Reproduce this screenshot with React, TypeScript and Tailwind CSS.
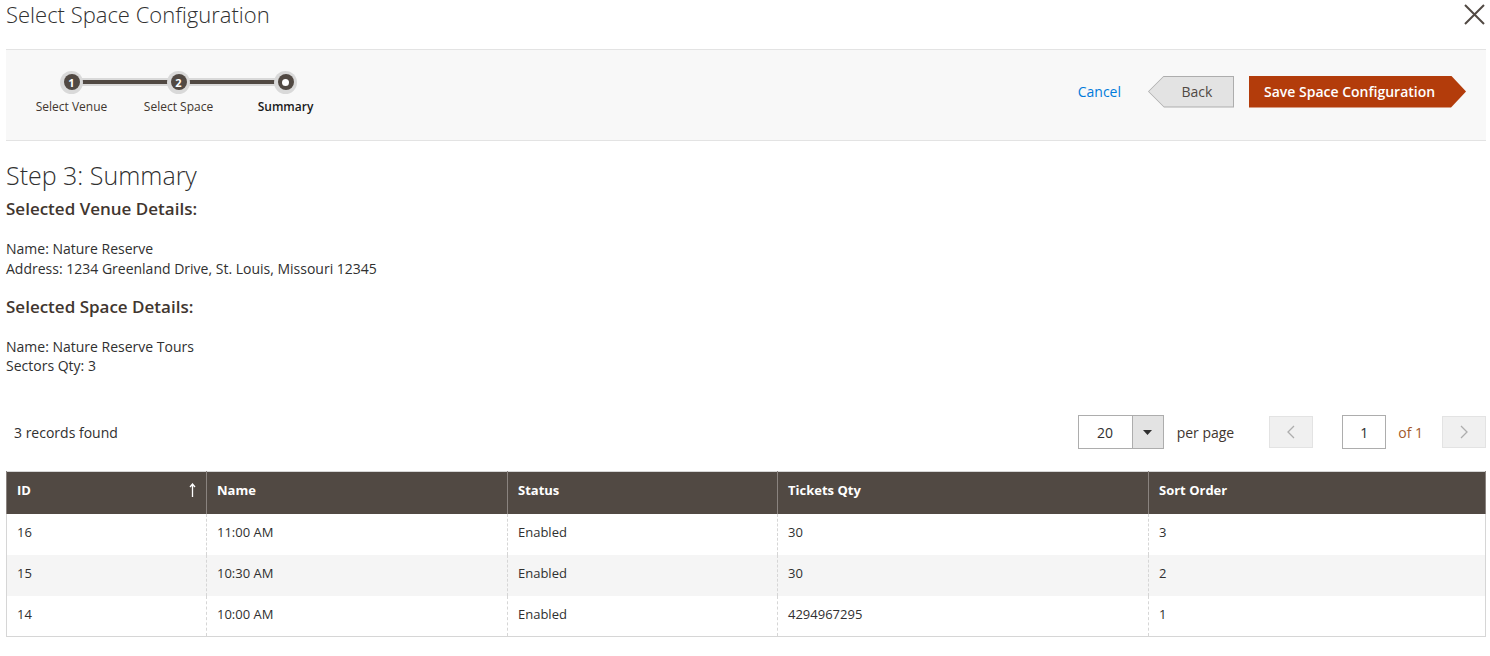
import React from "react";

const rows = [
  { id: "16", name: "11:00 AM", status: "Enabled", qty: "30", sort: "3" },
  { id: "15", name: "10:30 AM", status: "Enabled", qty: "30", sort: "2" },
  { id: "14", name: "10:00 AM", status: "Enabled", qty: "4294967295", sort: "1" },
];

const steps = [
  { label: "Select Venue", num: "1" },
  { label: "Select Space", num: "2" },
  { label: "Summary", num: "" },
];

const Stepper = () => (
  <div className="flex pl-[12px]">
    {steps.map((step, i) => (
      <div key={step.label} className="flex w-[107px] flex-col items-center">
        <div className="relative flex h-[24px] w-full items-center justify-center">
          {/* connector halves */}
          {i > 0 && (
            <div className="absolute left-0 top-[8px] h-[8px] w-1/2 bg-[#d9d9d9] py-[2px]">
              <div className="h-full w-full bg-[#514943]" />
            </div>
          )}
          {i < steps.length - 1 && (
            <div className="absolute right-0 top-[8px] h-[8px] w-1/2 bg-[#d9d9d9] py-[2px]">
              <div className="h-full w-full bg-[#514943]" />
            </div>
          )}
          <div className="relative flex h-[23px] w-[23px] items-center justify-center rounded-full bg-[#d9d9d9]">
            <div className="flex h-[16px] w-[16px] items-center justify-center rounded-full bg-[#514943] text-[11px] font-bold leading-none text-white">
              {step.num ? step.num : <div className="h-[7px] w-[7px] rounded-full bg-white" />}
            </div>
          </div>
        </div>
        <div
          className={
            "mt-[4px] text-[12px] leading-[18px] " +
            (step.num ? "text-[#41362f]" : "font-semibold text-[#1a1a1a]")
          }
        >
          {step.label}
        </div>
      </div>
    ))}
  </div>
);

export default function App() {
  return (
    <div className="min-h-[656px] w-full bg-white text-[#303030]" style={{ fontFamily: '"Open Sans", sans-serif' }}>
      {/* Modal header */}
      <div className="flex h-[49px] items-start justify-between pl-[6px] pr-[4px]">
        <h1 className="text-[22px] font-light leading-[28px] text-[#303030]">Select Space Configuration</h1>
        <button className="mt-[4px] mr-[1px] text-[#514943]">
          <svg width="21" height="21" viewBox="0 0 21 21" fill="none" stroke="currentColor" strokeWidth="2">
            <path d="M1 1L20 20M20 1L1 20" />
          </svg>
        </button>
      </div>

      {/* Steps bar */}
      <div className="ml-[6px] mr-[4px] flex h-[92px] items-center justify-between border-y border-[#e3e3e3] bg-[#f8f8f8]">
        <div className="pb-[4px]">
          <Stepper />
        </div>
        <div className="flex items-center pr-[20px] pb-[7px]">
          <button className="mr-[27px] text-[14px] text-[#007bdb]">Cancel</button>
          <div className="h-[32px] w-[86px] bg-[#adadad] [clip-path:polygon(16px_0,100%_0,100%_100%,16px_100%,0_50%)]">
            <div className="m-[1px] flex h-[30px] w-[84px] items-center justify-center pl-[12px] text-[14px] text-[#514943] bg-[#e3e3e3] [clip-path:polygon(15px_0,100%_0,100%_100%,15px_100%,0_50%)]">
              Back
            </div>
          </div>
          <div className="ml-[15px] flex h-[32px] w-[217px] items-center bg-[#b33c0b] pl-[15px] text-[14px] font-semibold text-white [clip-path:polygon(0_0,calc(100%-15px)_0,100%_50%,calc(100%-15px)_100%,0_100%)]">
            Save Space Configuration
          </div>
        </div>
      </div>

      {/* Summary */}
      <div className="pl-[6px] pr-[4px]">
        <h2 className="mt-[19px] text-[25px] font-light leading-[30px] text-[#303030]">Step 3: Summary</h2>
        <h3 className="mt-[9px] text-[17px] font-semibold leading-[20px] text-[#41362f]">Selected Venue Details:</h3>
        <div className="mt-[20px] text-[14px] leading-[20px]">
          <div>Name: Nature Reserve</div>
          <div>Address: 1234 Greenland Drive, St. Louis, Missouri 12345</div>
        </div>
        <h3 className="mt-[18px] text-[17px] font-semibold leading-[20px] text-[#41362f]">Selected Space Details:</h3>
        <div className="mt-[20px] text-[14px] leading-[19px]">
          <div>Name: Nature Reserve Tours</div>
          <div>Sectors Qty: 3</div>
        </div>

        {/* Grid toolbar */}
        <div className="mt-[40px] flex h-[34px] items-center justify-between">
          <div className="pl-[8px] text-[14px]">3 records found</div>
          <div className="flex items-center">
            <div className="flex h-[34px] w-[86px] border border-[#adadad] bg-white">
              <div className="flex w-[53px] items-center justify-center text-[14px]">20</div>
              <div className="flex w-[31px] items-center justify-center border-l border-[#adadad] bg-[#e3e3e3]">
                <svg width="9" height="5" viewBox="0 0 9 5">
                  <path d="M0 0H9L4.5 5Z" fill="#303030" />
                </svg>
              </div>
            </div>
            <div className="ml-[13px] text-[14px] text-[#41362f]">per page</div>
            <button className="ml-[35px] flex h-[32px] w-[44px] items-center justify-center border border-[#e3e3e3] bg-[#f0f0f0]">
              <svg width="8" height="14" viewBox="0 0 8 14" fill="none" stroke="#adadad" strokeWidth="1.3">
                <path d="M7 1L1 7L7 13" />
              </svg>
            </button>
            <div className="ml-[29px] flex h-[34px] w-[44px] items-center justify-center border border-[#adadad] bg-white text-[14px]">
              1
            </div>
            <div className="ml-[12px] text-[14px] text-[#a3592a]">of 1</div>
            <button className="ml-[19px] flex h-[32px] w-[44px] items-center justify-center border border-[#e3e3e3] bg-[#f0f0f0]">
              <svg width="8" height="14" viewBox="0 0 8 14" fill="none" stroke="#adadad" strokeWidth="1.3">
                <path d="M1 1L7 7L1 13" />
              </svg>
            </button>
          </div>
        </div>

        {/* Grid */}
        <table className="mt-[22px] w-full table-fixed border-collapse border border-[#d6d6d6] text-[13px]">
          <colgroup>
            <col className="w-[200px]" />
            <col className="w-[301px]" />
            <col className="w-[270px]" />
            <col className="w-[371px]" />
            <col />
          </colgroup>
          <thead>
            <tr className="h-[42px] bg-[#514943] text-left text-white">
              <th className="relative border-x border-[#8a837f] px-[10px] pb-[4px] font-bold">
                ID
                <span className="absolute right-[10px] top-[11px]">
                  <svg width="7" height="14" viewBox="0 0 7 14" fill="none" stroke="white" strokeWidth="1.3">
                    <path d="M3.5 14V1M1 4L3.5 1L6 4" />
                  </svg>
                </span>
              </th>
              <th className="border-x border-[#8a837f] px-[10px] pb-[4px] font-bold">Name</th>
              <th className="border-x border-[#8a837f] px-[10px] pb-[4px] font-bold">Status</th>
              <th className="border-x border-[#8a837f] px-[10px] pb-[4px] font-bold">Tickets Qty</th>
              <th className="border-x border-[#8a837f] px-[10px] pb-[4px] font-bold">Sort Order</th>
            </tr>
          </thead>
          <tbody>
            {rows.map((r, i) => (
              <tr key={r.id} className={(i === 1 ? "bg-[#f5f5f5] " : "bg-white ") + "h-[41px]"}>
                <td className="border-l border-dashed border-[#d6d6d6] px-[10px] pb-[2px]">{r.id}</td>
                <td className="border-l border-dashed border-[#d6d6d6] px-[10px] pb-[2px]">{r.name}</td>
                <td className="border-l border-dashed border-[#d6d6d6] px-[10px] pb-[2px]">{r.status}</td>
                <td className="border-l border-dashed border-[#d6d6d6] px-[10px] pb-[2px]">{r.qty}</td>
                <td className="border-l border-dashed border-[#d6d6d6] px-[10px] pb-[2px]">{r.sort}</td>
              </tr>
            ))}
          </tbody>
        </table>
      </div>
    </div>
  );
}
